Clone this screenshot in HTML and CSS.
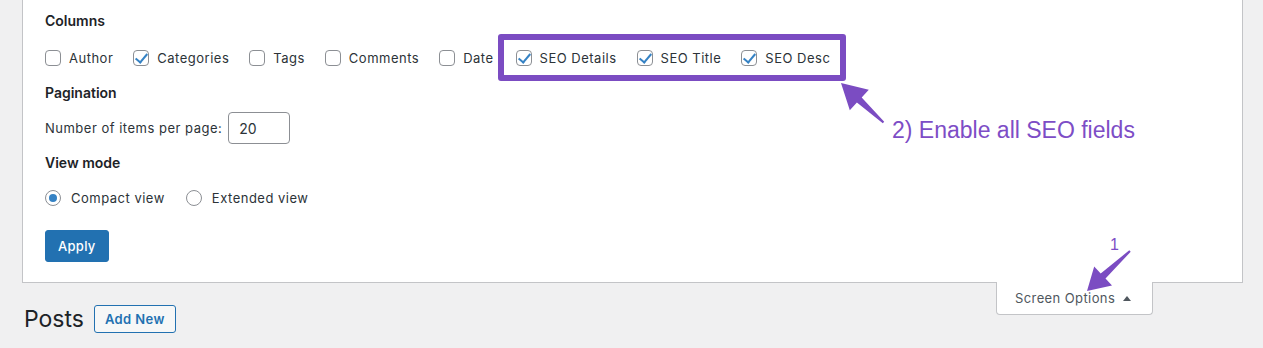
FILE: index.html
```html
<!DOCTYPE html>
<html lang="en">
<head>
<meta charset="utf-8">
<title>Posts ‹ Screen Options</title>
<link rel="stylesheet" href="styles.css">
</head>
<body>
<div class="page">
  <div class="meta-wrap">
    <div class="panel">
      <div class="heading">Columns</div>
      <div class="checks">
        <label class="opt"><input type="checkbox" class="cb">Author</label>
        <label class="opt"><input type="checkbox" class="cb" checked>Categories</label>
        <label class="opt"><input type="checkbox" class="cb">Tags</label>
        <label class="opt"><input type="checkbox" class="cb">Comments</label>
        <label class="opt"><input type="checkbox" class="cb">Date</label>
        <span class="seo-group">
          <label class="opt"><input type="checkbox" class="cb" checked>SEO Details</label>
          <label class="opt"><input type="checkbox" class="cb" checked>SEO Title</label>
          <label class="opt"><input type="checkbox" class="cb" checked>SEO Desc</label>
        </span>
      </div>

      <div class="heading heading-pagination">Pagination</div>
      <div class="per-page">
        <label for="ppp">Number of items per page:</label>
        <input id="ppp" class="num" type="text" value="20">
      </div>

      <div class="heading heading-view">View mode</div>
      <div class="radios">
        <label class="ropt"><input type="radio" name="mode" class="rb" checked>Compact view</label>
        <label class="ropt"><input type="radio" name="mode" class="rb">Extended view</label>
      </div>

      <button class="apply" type="button">Apply</button>
    </div>
    <button class="toggle" type="button">Screen Options <span class="caret"></span></button>
  </div>

  <div class="title-row">
    <h1 class="title">Posts</h1>
    <a class="add-new" href="#">Add New</a>
  </div>

  <div class="notes">
    <svg class="arrows" width="1263" height="348" viewBox="0 0 1263 348" aria-hidden="true">
      <polygon class="arrow" points="841,83 868.8,89.8 861.7,97.4 884.2,121.8 882.8,123.2 856.9,102.6 849.8,110.2"/>
      <polygon class="arrow" points="1087,291 1094.2,266.5 1100.7,273.4 1129.3,250.3 1130.7,251.7 1105.5,278.6 1112,285.5"/>
    </svg>
    <div class="note note-two">2) Enable all SEO fields</div>
    <div class="note note-one">1</div>
  </div>
</div>
</body>
</html>
```

FILE: styles.css
```css
* { box-sizing: border-box; }

html, body {
  margin: 0;
  padding: 0;
}

body {
  background: #f0f0f1;
  font-family: Inter, "Noto Sans", "Liberation Sans", sans-serif;
  font-size: 13px;
  color: #2c3338;
}

.page {
  position: relative;
  width: 1263px;
  height: 348px;
  overflow: hidden;
}

.meta-wrap {
  position: relative;
  margin: 0 20px 0 22px;
}

.panel {
  background: #fff;
  border: 1px solid #c3c4c7;
  border-top: 0;
  padding: 11px 22px 20px;
}

.heading {
  font-size: 14px;
  line-height: 20px;
  font-weight: 600;
  color: #1d2327;
}

.heading-pagination { margin-top: 13px; }
.heading-view { margin-top: 9px; }

.checks {
  margin-top: 15px;
  height: 24px;
  display: flex;
  align-items: center;
  gap: 20px;
  letter-spacing: 0.5px;
}

.opt, .ropt {
  display: flex;
  align-items: center;
  gap: 8px;
  line-height: 20px;
  white-space: nowrap;
}

.cb, .rb {
  -webkit-appearance: none;
  appearance: none;
  margin: 0;
  width: 16px;
  height: 16px;
  border: 1px solid #8c8f94;
  background: #fff;
  position: relative;
  flex: none;
}

.cb { border-radius: 4px; }

.cb:checked::before {
  content: "";
  position: absolute;
  left: 4px;
  top: 0px;
  width: 5px;
  height: 10px;
  border-right: 2.5px solid #3582c4;
  border-bottom: 2.5px solid #3582c4;
  transform: rotate(40deg);
}

.rb { border-radius: 50%; }

.rb:checked::before {
  content: "";
  position: absolute;
  left: 3px;
  top: 3px;
  width: 8px;
  height: 8px;
  border-radius: 50%;
  background: #3582c4;
}

.seo-group {
  position: relative;
  display: flex;
  align-items: center;
  gap: 20px;
  margin-left: 2px;
}

.seo-group::before {
  content: "";
  position: absolute;
  top: -14px;
  bottom: -13px;
  left: -18px;
  right: -16px;
  border: 6px solid #7b4cc2;
  border-radius: 3px;
  pointer-events: none;
}

.per-page {
  margin-top: 9px;
  display: flex;
  align-items: center;
  gap: 6px;
  letter-spacing: 0.5px;
}

.num {
  width: 62px;
  height: 32px;
  border: 1px solid #8c8f94;
  border-radius: 4px;
  padding: 0 10px;
  font-family: inherit;
  font-size: 14px;
  color: #2c3338;
  background: #fff;
}

.radios {
  margin-top: 13px;
  height: 24px;
  display: flex;
  align-items: center;
  gap: 21px;
  letter-spacing: 0.5px;
}

.ropt { gap: 10px; }

.apply {
  display: block;
  margin-top: 20px;
  height: 32px;
  padding: 0 12px;
  border: 1px solid #2271b1;
  border-radius: 3px;
  background: #2271b1;
  color: #fff;
  font-family: inherit;
  font-size: 13px;
  font-weight: 500;
  letter-spacing: 0.3px;
}

.toggle {
  position: absolute;
  top: 100%;
  right: 90px;
  margin-top: -1px;
  width: 157px;
  height: 33px;
  padding: 0 0 0 18px;
  display: flex;
  align-items: center;
  gap: 8px;
  background: #fff;
  border: 1px solid #c3c4c7;
  border-top: 0;
  border-radius: 0 0 4px 4px;
  font-family: inherit;
  font-size: 13px;
  letter-spacing: 0.4px;
  color: #50575e;
}

.caret {
  width: 0;
  height: 0;
  border-left: 4px solid transparent;
  border-right: 4px solid transparent;
  border-bottom: 5px solid #50575e;
}

.title-row {
  margin: 22px 0 0 24px;
  display: flex;
  align-items: center;
  gap: 10px;
}

.title {
  margin: 0;
  font-size: 23px;
  line-height: 28px;
  font-weight: 400;
  color: #1d2327;
}

.add-new {
  display: inline-flex;
  align-items: center;
  height: 28px;
  padding: 0 10px;
  border: 1px solid #2271b1;
  border-radius: 3px;
  background: #f6f7f7;
  color: #2271b1;
  font-size: 13px;
  font-weight: 600;
  letter-spacing: 0.4px;
  text-decoration: none;
}

.notes {
  position: absolute;
  inset: 0;
  pointer-events: none;
}

.arrows {
  position: absolute;
  left: 0;
  top: 0;
}

.arrow {
  fill: #7b4cc2;
}

.note {
  position: absolute;
  font-family: "Liberation Sans", Arial, sans-serif;
  color: #7d4dc6;
  white-space: nowrap;
}

.note-two {
  left: 892px;
  top: 119px;
  font-size: 23px;
  line-height: 23px;
}

.note-one {
  left: 1110px;
  top: 237px;
  font-size: 16px;
  line-height: 16px;
}
```
